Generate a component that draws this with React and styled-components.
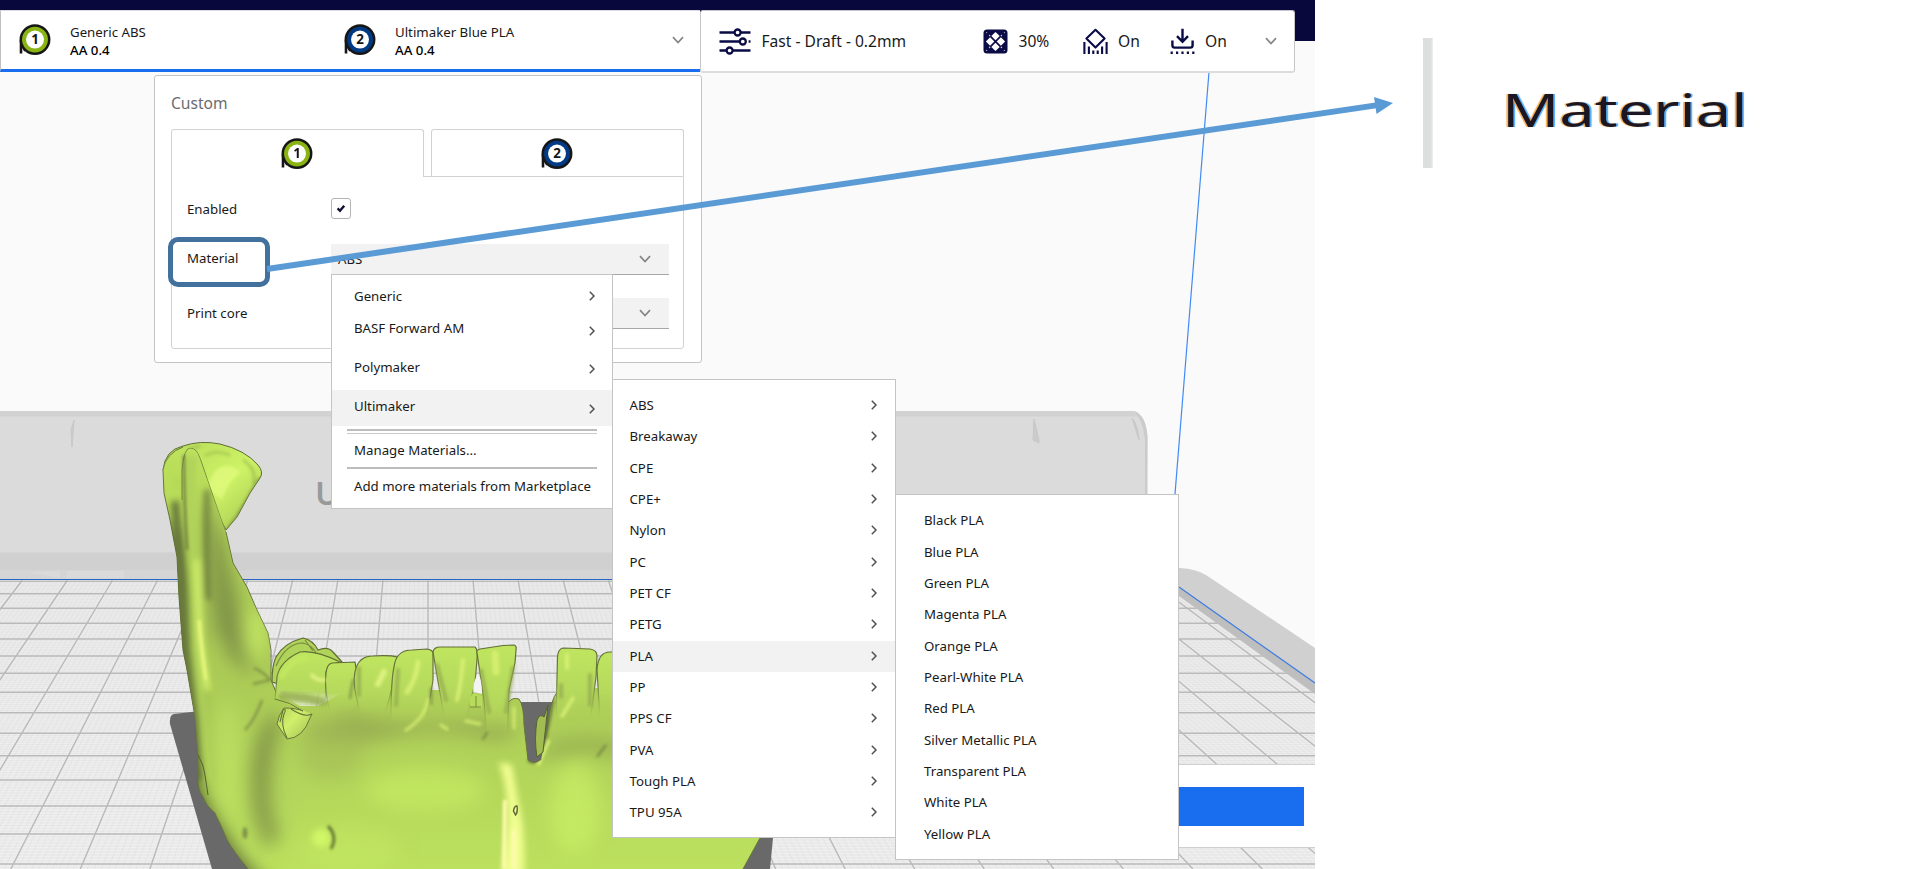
import React from "react";
import styled, { createGlobalStyle } from "styled-components";

const GlobalStyle = createGlobalStyle`
  *, *::before, *::after { box-sizing: border-box; }
  body { margin: 0; background: #fff; overflow: hidden; }
`;

const Page = styled.main`
  position: relative;
  display: flex;
  width: 1920px;
  height: 869px;
  overflow: hidden;
  background: #fff;
  color: #191919;
  font: 13.25px/20px "Noto Sans", sans-serif;
  white-space: nowrap;
`;

const Workspace = styled.section`
  position: relative;
  flex: 0 0 1315px;
  height: 869px;
  overflow: hidden;
  background: linear-gradient(#08083c 0 41px, #fafafa 41px);
`;

const SceneSvg = styled.svg`
  position: absolute;
  inset: 0;
`;

/* ---------- header ---------- */

const Header = styled.header`
  position: relative;
  display: flex;
  padding-top: 10px;
`;

const ExtruderBar = styled.div`
  display: flex;
  align-items: center;
  width: 700px;
  height: 62px;
  padding: 0 16px 0 18px;
  background: #fff;
  border-left: 1px solid #c0c0c4;
  border-top: 1px solid #dcdce0;
  border-bottom: 3px solid #196ef0;
`;

const ExtruderInfo = styled.div`
  display: flex;
  align-items: center;
  width: ${(p) => p.$width}px;
  gap: 19px;
`;

const ExtruderText = styled.div`
  display: flex;
  flex-direction: column;
  padding-top: 1px;
  line-height: 18px;
`;

const CoreName = styled.span`
  color: #000;
  font-weight: 500;
`;

const SettingsBar = styled.div`
  display: flex;
  align-items: center;
  width: 595px;
  height: 63px;
  padding: 0 17px 0 18px;
  background: #fff;
  border: 1px solid #c6c6ca;
  border-bottom: 2px solid #dcdcdc;
  border-radius: 3px;
  font-size: 15.6px;
`;

const Setting = styled.div`
  display: flex;
  align-items: center;
  width: ${(p) => p.$width}px;
  gap: ${(p) => p.$gap}px;
`;

const Push = styled.div`
  margin-left: auto;
  display: flex;
`;

/* ---------- configuration panel ---------- */

const Panel = styled.section`
  position: relative;
  width: 548px;
  height: 288px;
  margin: 2px 0 0 154px;
  padding: 17px 17px 0 16px;
  background: #fff;
  border: 1px solid #c4c4c4;
  border-radius: 3px;
`;

const PanelTitle = styled.h1`
  margin: 0 0 16px;
  color: #6c6c6c;
  font-size: 15.6px;
  line-height: 20px;
  font-weight: 400;
`;

const Tabs = styled.div`
  display: flex;
  gap: 7px;
  height: 47px;
`;

const Tab = styled.div`
  position: relative;
  z-index: ${(p) => (p.$active ? 1 : 0)};
  flex: 1;
  display: flex;
  justify-content: center;
  padding: 8px 1px 0 0;
  margin-bottom: ${(p) => (p.$active ? -1 : 0)}px;
  background: #fff;
  border: 1px solid #d2d2d2;
  border-bottom: 0;
  border-radius: 3px 3px 0 0;
`;

const TabBody = styled.div`
  height: 173px;
  padding: 22px 14px 0 15px;
  border: 1px solid #d2d2d2;
  border-radius: 0 0 3px 3px;
`;

const Field = styled.div`
  display: flex;
  align-items: flex-start;
  height: ${(p) => p.$height}px;
`;

const FieldLabel = styled.label`
  width: 144px;
  padding-top: ${(p) => p.$top}px;
`;

const Checkbox = styled.div`
  display: flex;
  align-items: center;
  justify-content: center;
  width: 20px;
  height: 21px;
  margin-top: -1px;
  background: #fff;
  border: 1px solid #b4b4b4;
  border-radius: 3px;
`;

const Select = styled.div`
  display: flex;
  align-items: center;
  justify-content: space-between;
  width: 338px;
  height: 31px;
  padding: 0 18px 0 7px;
  background: #f2f2f2;
  border-bottom: 1px solid #a8a8a8;
`;

/* ---------- menus ---------- */

const Menu = styled.nav`
  position: absolute;
  left: ${(p) => p.$x}px;
  top: ${(p) => p.$y}px;
  width: ${(p) => p.$width}px;
  height: ${(p) => p.$height}px;
  padding-top: ${(p) => p.$pad}px;
  background: #fff;
  border: 1px solid #c4c4c4;
`;

const MenuItem = styled.div`
  display: flex;
  align-items: center;
  justify-content: space-between;
  height: ${(p) => p.$height}px;
  padding: 0 ${(p) => p.$right || 17}px ${(p) => p.$lift || 1.4}px ${(p) => p.$left}px;
  background: ${(p) => (p.$active ? "#f2f2f2" : "transparent")};
`;

const ArrowSlot = styled.span`
  display: flex;
  padding-top: ${(p) => p.$drop || 0}px;
`;

const Divider = styled.hr`
  height: ${(p) => (p.$double ? 5 : 2)}px;
  margin: ${(p) => (p.$double ? 3 : 0)}px 15px 0;
  border: 0;
  border-top: 2px solid #bdbdbd;
  border-bottom: ${(p) => (p.$double ? 1 : 0)}px solid #cacaca;
`;

/* ---------- action panel ---------- */

const ActionPanel = styled.div`
  position: absolute;
  right: 0;
  top: 764px;
  width: 300px;
  height: 84px;
  padding: 22px 11px;
  background: #fff;
  border: 1px solid #cfcfcf;
  border-width: 1px 0;
`;

const ActionButton = styled.div`
  height: 39px;
  background: #196ef0;
`;

/* ---------- annotation ---------- */

const Callout = styled.aside`
  display: flex;
  align-items: center;
  gap: 69px;
  height: 130px;
  margin: 38px 0 0 108px;
`;

const CalloutBar = styled.span`
  width: 10px;
  height: 130px;
  background: linear-gradient(90deg, #dcdfde 0 80%, #f1f2f2);
`;

const CalloutText = styled.span`
  width: 241px;
  font-size: 46px;
  line-height: 60px;
  transform: translateY(6px) scaleX(1.375);
  transform-origin: left center;
  text-shadow: -1.3px 0 0.6px rgba(245, 150, 30, 0.75), 1.3px 0 0.6px rgba(30, 150, 255, 0.75);
  color: #1c1622;
`;

const HighlightBox = styled.div`
  position: absolute;
  left: 168px;
  top: 237px;
  width: 102px;
  height: 50px;
  border: 5px solid #41719c;
  border-radius: 10px;
`;

/* ---------- icons ---------- */

const Spool = ({ n, color }) => (
  <svg width="32" height="32" viewBox="0 0 32 32">
    <path d="M2 16V29.5" stroke="#161616" strokeWidth="2.6" fill="none" />
    <path d="M2 19L6 27" stroke="#161616" strokeWidth="2" fill="none" />
    <circle cx="16" cy="15.6" r="14.2" fill={color} stroke="#161616" strokeWidth="2.5" />
    <circle cx="16" cy="15.6" r="9" fill="#fff" />
    <text x="16" y="20.4" textAnchor="middle" fontSize="13.4" fontWeight="700" fontFamily="Noto Sans, sans-serif" fill="#161616">{n}</text>
  </svg>
);

const ChevronDown = () => (
  <svg width="12" height="8" viewBox="0 0 12 8" fill="none" stroke="#858585" strokeWidth="1.7">
    <path d="M1 1.2L6 6.6L11 1.2" />
  </svg>
);

const ChevronRight = () => (
  <svg width="6" height="10" viewBox="0 0 6 10" fill="none" stroke="#505050" strokeWidth="1.5">
    <path d="M0.8 0.8L5 5L0.8 9.2" />
  </svg>
);

const SlidersIcon = () => (
  <svg width="32" height="27" viewBox="0 0 32 27" fill="none" stroke="#0b0b45" strokeWidth="2.3">
    <path d="M0.5 4.5H15.5M22 4.5H31.5M0.5 13.5H20M29.6 13.5H31.5M0.5 22.5H7M14 22.5H31.5" />
    <circle cx="18.6" cy="4.5" r="3" />
    <circle cx="23.8" cy="13.5" r="3" />
    <circle cx="10.6" cy="22.5" r="3" />
  </svg>
);

const InfillIcon = () => (
  <svg width="25" height="25" viewBox="0 0 25 25">
    <rect x="0.5" y="0.5" width="24" height="24" rx="3.5" fill="#0b0b45" />
    <g fill="#fff">
      {[[12.5, 7.1], [7.1, 12.5], [17.9, 12.5], [12.5, 17.9]].map(([x, y]) => (
        <path key={`${x}-${y}`} d={`M${x} ${y - 4.2}l4.2 4.2l-4.2 4.2l-4.2 -4.2z`} />
      ))}
      {[[6.6, 6.6], [18.4, 6.6], [6.6, 18.4], [18.4, 18.4]].map(([x, y]) => (
        <circle key={`${x}-${y}`} cx={x} cy={y} r="0.8" opacity="0.75" />
      ))}
      {[[3.6, 3.6], [21.4, 3.6], [3.6, 21.4], [21.4, 21.4]].map(([x, y]) => (
        <circle key={`${x}-${y}`} cx={x} cy={y} r="0.7" opacity="0.6" />
      ))}
    </g>
  </svg>
);

const SupportIcon = () => (
  <svg width="25" height="27" viewBox="0 0 25 27" fill="none" stroke="#0b0b45" strokeWidth="2.1">
    <path d="M12.5 1.8L21.6 10.6L12.5 19.6L3.4 10.6Z" strokeLinejoin="round" />
    <path d="M1.4 14V26M23.6 14V26M5.9 18.5V26M19.1 18.5V26M10.3 22.5V26M14.7 22.5V26" />
  </svg>
);

const AdhesionIcon = () => (
  <svg width="25" height="27" viewBox="0 0 25 27" fill="none" stroke="#0b0b45" strokeWidth="2.4">
    <path d="M12.5 0.8V13M7 8.2L12.5 13.8L18 8.2" />
    <path d="M2.4 12.5V17.2Q2.4 19.6 4.8 19.6H20.2Q22.6 19.6 22.6 17.2V12.5" />
    <path d="M0.6 24.8H24.4" strokeDasharray="2.2 3.2" />
  </svg>
);

const CheckIcon = () => (
  <svg width="10" height="9" viewBox="0 0 10 9" fill="none" stroke="#101030" strokeWidth="2.4">
    <path d="M1.6 4.4L4 6.8L8.2 1.8" />
  </svg>
);

/* ---------- 3D scene ---------- */

const VANISH_X = 428;
const VANISH_Y = 48;
const FLOOR_TOP = 580.5;
const CELL = 45.1;
const ROWS = [580, 593.7, 608.3, 623.3, 639, 656, 673.3, 692.3, 712.7, 733.3, 755.7, 780, 806, 834, 864, 896];
const atBottom = (x) => VANISH_X + ((x - VANISH_X) * (869 - VANISH_Y)) / (FLOOR_TOP - VANISH_Y);

const Floor = () => {
  const major = [];
  const minor = [];
  for (let i = -10; i <= 21; i += 1) {
    const x = VANISH_X + i * CELL;
    major.push(`M${x} ${FLOOR_TOP}L${atBottom(x)} 869`);
    for (let k = 1; k < 10; k += 1) {
      const m = x + (k * CELL) / 10;
      minor.push(`M${m} ${FLOOR_TOP}L${atBottom(m)} 869`);
    }
  }
  ROWS.slice(1).forEach((y, i) => {
    major.push(`M0 ${y}H1315`);
    const step = (y - ROWS[i]) / 10;
    for (let k = 1; k < 10; k += 1) minor.push(`M0 ${ROWS[i] + k * step}H1315`);
  });
  return (
    <g clipPath="url(#floorClip)">
      <rect x="0" y="580" width="1315" height="289" fill="#efefef" />
      <path d={minor.join("")} stroke="#d8d8d8" strokeWidth="0.5" opacity="0.7" fill="none" />
      <path d={major.join("")} stroke="#b9b9b9" strokeWidth="1.4" fill="none" />
    </g>
  );
};

const JAW_BODY =
  "M270 640L271 680L278 694L300 706L318 706L340 694L392 690L440 690L473 693L482 692L508 702Q512 697 519 699Q524 706 524 725L528 760Q534 765 541 760L548 725Q550 700 558 691L597 688H765V810L760 838L743 869H248Q234 852 227 840Q221 825 215 813Q206 806 203 797Q197 788 198 780L198 753L195 717L187 670L183 650L179 597L177 557L170 520L164 493L163 470Q166 453 183 447L195 448Q201 455 208 480L226 532L233 563L247 587L257 610L268 633Z";

const JAW_OUTLINE =
  "M248 869Q234 852 227 840Q221 825 215 813Q206 806 203 797Q197 788 198 780L198 753L195 717L187 670L183 650L179 597L177 557L170 520L164 493L163 470Q166 453 183 447M226 532L233 563L247 587L257 610L268 633L271 650L271 680L276 692M509 702Q512 697 519 699Q524 706 524 725L528 760Q534 765 541 760L548 725Q550 700 558 691M765 810L760 838L743 869";

const CONDYLE =
  "M163 470Q165 450 183 446Q200 440 220 444Q245 450 258 465Q264 472 260 478L250 493L237 517L226 530L200 480Z";

const TEETH = [
  "M275 700L277 677Q280 661 300 652Q315 650 340 662Q328 664 326 672L326 707L313 714",
  "M330 712Q324 690 326 673Q327 664 332 663L355 662L358 680L358 705Q350 714 340 713",
  "M360 712Q352 685 355 672Q358 656 373 656Q390 655 397 657L392 687Q389 703 383 716",
  "M391 722Q391 680 394 667Q396 650 412 650L427 649Q434 650 433 655L433 680Q430 700 425 724",
  "M445 720L440 693L433 652Q434 647 440 647L475 647Q478 649 477 660L475 683L466 720",
  "M487 738L484 700L477 653Q476 650 480 649L503 645.5L514 645Q517 646 516 650L515 663L509 690L507 738",
  "M556 720L557.5 657Q558 649 563 648L590 649Q597 650 597 656L596 677L590 722",
  "M600 720L597 670Q598 652 610 652H640V720",
];

const Jaw = () => (
  <g>
    <path d={CONDYLE} fill="url(#condyle)" stroke="#5f6d35" strokeWidth="1" />
    <g filter="url(#soft3)" opacity="0.7" clipPath="url(#condyleClip)" fill="none">
      <path d="M208 488Q213 466 226 466Q236 466 240 473Q230 478 222 500Z" fill="#e4fb80" />
      <path d="M205 456Q215 449 230 455" stroke="#a3c353" strokeWidth="3" />
      <path d="M243 460Q258 470 253 484" stroke="#9fbe50" strokeWidth="3" />
      <path d="M260 478L237 517L226 532" stroke="#7d9440" strokeWidth="4" />
      <path d="M165 465Q180 450 200 446" stroke="#9ebc50" strokeWidth="3" />
    </g>

    <path d="M272 682Q272 665 276 657Q284 643 303 638Q313 640 318 650Q328 646 333 652L342 662L300 690Z" fill="#b0d359" stroke="#5f6d35" strokeWidth="1.2" />
    <path d="M276 666Q286 643 303 643Q312 645 316 653M305 640L313 651" stroke="#788b40" strokeWidth="1.2" fill="none" />

    <path d={JAW_BODY} fill="url(#bone)" />
    <path d={JAW_OUTLINE} fill="none" stroke="#66753a" strokeWidth="1" />

    <g clipPath="url(#jawClip)">
      <g filter="url(#soft10)">
        <path d="M150 520L181 530L188 600L196 700L202 790L252 880H190L150 620Z" fill="#5a6932" opacity="0.95" />
        <path d="M206 490Q207 570 214 625L232 660L254 675Q238 600 224 540Z" fill="#7d9146" opacity="0.95" />
        <path d="M272 712Q250 740 250 775Q248 820 268 850L280 835Q262 790 283 722Z" fill="#788a44" opacity="0.75" />
        <path d="M200 805Q230 845 262 880L310 900H190Z" fill="#606e38" opacity="0.95" />
        <path d="M300 730Q340 750 390 738T500 742L520 730L500 718Q400 728 350 712Z" fill="#8da04e" opacity="0.65" />
        <path d="M545 742Q590 730 630 742V760Q580 748 545 762Z" fill="#8fa64f" opacity="0.65" />
        <ellipse cx="330" cy="750" rx="34" ry="30" fill="#9fb856" opacity="0.5" />
        <ellipse cx="228" cy="760" rx="12" ry="60" fill="#bfe262" opacity="0.7" />
        <ellipse cx="255" cy="635" rx="9" ry="26" fill="#cbef66" opacity="0.9" />
        <ellipse cx="425" cy="790" rx="60" ry="22" fill="#cff766" opacity="0.45" />
        <ellipse cx="575" cy="808" rx="26" ry="45" fill="#d0f867" opacity="0.5" />
        <ellipse cx="290" cy="775" rx="12" ry="45" fill="#b2d45c" opacity="0.5" />
        <ellipse cx="350" cy="850" rx="50" ry="25" fill="#c4ea62" opacity="0.5" />
      </g>
      <g filter="url(#soft5)" fill="none">
        <path d="M192 455Q187 500 194 560L196 640Q201 730 212 780" stroke="#b0d25a" strokeWidth="11" />
        <path d="M174 480Q177 540 184 590L187 650L195 720L199 780" stroke="#65743a" strokeWidth="8" />
        <path d="M207 490Q206 550 208 600" stroke="#66763a" strokeWidth="5" />
        <path d="M197 560L201 640L208 690" stroke="#d9f670" strokeWidth="5" />
        <path d="M170 460Q172 480 176 500" stroke="#b8dd58" strokeWidth="9" />
        <path d="M499 762Q510 795 507 830L502 875H524Q526 830 518 800L512 765Z" fill="#f0fd90" />
        <ellipse cx="321" cy="838" rx="9" ry="9" fill="#d0f768" />
      </g>
      <g filter="url(#soft3)" fill="none">
        <path d="M184 455Q184 500 187 550" stroke="#6f803e" strokeWidth="2.5" />
        <path d="M199 620Q202 655 206 680" stroke="#eaf97f" strokeWidth="3" />
        <path d="M505 800L504 869M514 830V869" stroke="#fffcae" strokeWidth="4" />
        <path d="M254 668Q264 672 271 681M253 684L270 680M262 700Q255 720 245 730" stroke="#7c8f45" strokeWidth="2.2" />
        <path d="M328 826Q338 836 331 849" stroke="#59672f" strokeWidth="2.6" />
        <ellipse cx="245" cy="833" rx="2.5" ry="6" fill="#7e9147" />
        <path d="M528 760Q538 768 544 745L553 700" stroke="#66753a" strokeWidth="3" />
        <path d="M597 757Q602 750 606 745" stroke="#6c7c3c" strokeWidth="2" />
        <path d="M538 765L549 740" stroke="#e0f97a" strokeWidth="3" />
      </g>
      <path d="M182 500L182 470Q184 448 190 448Q197 448 200 458L226 532" stroke="#5a6932" strokeWidth="0.9" fill="none" opacity="0.75" />
      <path d="M198 755Q204 765 205 775L208 795" stroke="#55622e" strokeWidth="1" fill="none" />
    </g>

    {TEETH.map((d) => (
      <path key={d} d={d} fill="url(#tooth)" stroke="url(#toothEdge)" strokeWidth="1.2" />
    ))}

    <g filter="url(#soft3)" fill="none" strokeLinecap="round" opacity="0.7">
      <path d="M398 670L396 705M437 665L446 700M481 670L489 712M513 668L506 712M590 675V705M561 685V697M359 668V695" stroke="#8fa64d" strokeWidth="4" />
      <path d="M283 696L305 698L322 702" stroke="#91a84e" strokeWidth="8" />
      <path d="M282 676Q290 660 306 658" stroke="#c5ea61" strokeWidth="6" />
      <path d="M418 662Q416 680 407 692" stroke="#e2f67c" strokeWidth="5" />
      <path d="M463 660Q461 685 457 700" stroke="#e2f67c" strokeWidth="4" />
      <path d="M495 654L496 672" stroke="#ddf474" strokeWidth="7" />
      <path d="M378 684L384 672" stroke="#ebf98c" strokeWidth="6" />
      <path d="M312 675Q317 681 324 680" stroke="#eefa90" strokeWidth="4" />
      <path d="M567 655V668M573 698L562 716" stroke="#e0f67a" strokeWidth="4" />
      <path d="M428 700Q425 718 406 730M441 725L447 729M466 721L480 724M514 708V728" stroke="#dcf374" strokeWidth="3.5" />
      <path d="M353 680L350 698M431 688V704M487 733L483 739" stroke="#65753a" strokeWidth="2.2" />
    </g>

    <path d="M275 699Q290 702 303 711Q296 708 284 708Q278 716 277 724L287 739Q303 738 310 718L312 714" fill="url(#socket)" stroke="#66753a" strokeWidth="1" />
    <path d="M280 722L283 710Q287 708 284 714Q280 724 287 738M291 709Q305 718 312 714" stroke="#65743a" strokeWidth="1.1" fill="none" />
    <path d="M478 673Q472 685 473.5 692L482 694Q482 680 478 673Z" fill="#f4f4f4" />
    <path d="M470 707Q469 695 474 693L482 696V708Z" fill="#b7dc5c" />
    <path d="M476 696V707M470 707H481" stroke="#78893f" strokeWidth="1" />
    <path d="M537 757Q534 740 537 720Q540 713 544 717L548 705L543 752Z" fill="#a1bc52" stroke="#55632f" strokeWidth="1" />
    <path d="M513.5 811Q514 806 517 806Q518 812 515.5 815Z" fill="#eef59a" stroke="#5f6d35" strokeWidth="1.5" />
  </g>
);

const Scene = () => (
  <SceneSvg width="1315" height="869" viewBox="0 0 1315 869">
    <defs>
      <clipPath id="floorClip"><path d="M0 580H1163L1179 592L1315 692V869H0Z" /></clipPath>
      <clipPath id="jawClip"><path d={JAW_BODY} /></clipPath>
      <clipPath id="condyleClip"><path d={CONDYLE} /></clipPath>
      <linearGradient id="bone" gradientUnits="userSpaceOnUse" x1="0" y1="440" x2="0" y2="869">
        <stop offset="0" stopColor="#bfe45e" />
        <stop offset="0.45" stopColor="#a9c856" />
        <stop offset="0.7" stopColor="#b0d159" />
        <stop offset="1" stopColor="#bce15e" />
      </linearGradient>
      <linearGradient id="condyle" x1="0" y1="0" x2="1" y2="1">
        <stop offset="0" stopColor="#b5da58" />
        <stop offset="0.55" stopColor="#cdf366" />
        <stop offset="1" stopColor="#a3c150" />
      </linearGradient>
      <linearGradient id="socket" x1="0" y1="0" x2="1" y2="1">
        <stop offset="0" stopColor="#a8c653" />
        <stop offset="0.5" stopColor="#d0ef6c" />
        <stop offset="1" stopColor="#a3bf52" />
      </linearGradient>
      <linearGradient id="tooth" x1="0" y1="0" x2="0" y2="1">
        <stop offset="0" stopColor="#bfe560" />
        <stop offset="0.6" stopColor="#b5d95c" />
        <stop offset="1" stopColor="#b0d059" stopOpacity="0" />
      </linearGradient>
      <linearGradient id="toothEdge" x1="0" y1="0" x2="0" y2="1">
        <stop offset="0" stopColor="#5f6d35" />
        <stop offset="0.5" stopColor="#6d7d3c" />
        <stop offset="0.95" stopColor="#8fa64f" stopOpacity="0" />
      </linearGradient>
      <filter id="soft10" x="-30%" y="-30%" width="160%" height="160%"><feGaussianBlur stdDeviation="9" /></filter>
      <filter id="soft5" x="-30%" y="-30%" width="160%" height="160%"><feGaussianBlur stdDeviation="3.4" /></filter>
      <filter id="soft3" x="-30%" y="-30%" width="160%" height="160%"><feGaussianBlur stdDeviation="1.6" /></filter>
    </defs>

    {/* back wall of the printer */}
    <path d="M0 411H1134Q1146 415 1147.5 437L1146 580H0Z" fill="#dbdbdb" />
    <path d="M0 411H1134L1140 416.5H0Z" fill="#d2d2d2" />
    <path d="M1134 411Q1146 415 1147.5 437V500H1145V440Q1143 420 1134 411Z" fill="#cbcbcb" />
    <path d="M0 552.5H1179V580H0Z" fill="#d0d0d0" />
    <path d="M0 570H1179V580H0Z" fill="#d5d5d5" />
    <path d="M74 420L72 447L71 430ZM1034 419L1039 440V443L1033 440ZM1132 418Q1138 425 1139 440Z" fill="#cbcbcb" stroke="#c8c8c8" />
    <path d="M26 572L60 578V571ZM67 571H124V578H67Z" fill="#dadada" />
    <text x="315" y="505" fontFamily="Noto Sans, sans-serif" fontSize="33" fontWeight="600" fill="#999">U</text>
    <Floor />
    <path d="M0 581.2H1170" stroke="#a9a9a9" strokeWidth="1" />
    <path d="M0 579.5H1170" stroke="#2767c4" strokeWidth="1" />

    {/* right rim of the build plate */}
    <path d="M1150 568H1180Q1196 569 1206 575L1315 648V693L1179 593L1150 575Z" fill="#d0d0d0" />
    <path d="M1179 587L1315 683V694L1179 596Z" fill="#bebebe" />
    <path d="M1179 587L1315 683" stroke="#3d7de0" strokeWidth="1.2" />
    <path d="M1209 72L1175 494" stroke="#3f8af5" strokeWidth="1.2" />

    {/* shadow and model */}
    <path d="M170 724Q169 715 174 714L200 711L505 702H773V838L770 869H212Z" fill="#696969" />
    <Jaw />
  </SceneSvg>
);

/* ---------- data ---------- */

const BRANDS = [
  { name: "Generic", height: 33, drop: 0 },
  { name: "BASF Forward AM", height: 32, drop: 5 },
  { name: "Polymaker", height: 45, drop: 4 },
];
const TYPES = ["ABS", "Breakaway", "CPE", "CPE+", "Nylon", "PC", "PET CF", "PETG", "PLA", "PP", "PPS CF", "PVA", "Tough PLA", "TPU 95A"];
const COLORS = ["Black PLA", "Blue PLA", "Green PLA", "Magenta PLA", "Orange PLA", "Pearl-White PLA", "Red PLA", "Silver Metallic PLA", "Transparent PLA", "White PLA", "Yellow PLA"];

export default function App() {
  return (
    <Page>
      <GlobalStyle />
      <Workspace>
        <Scene />
        <Header>
          <ExtruderBar>
            <ExtruderInfo $width={325}>
              <Spool n="1" color="#8ab414" />
              <ExtruderText>
                <span>Generic ABS</span>
                <CoreName>AA 0.4</CoreName>
              </ExtruderText>
            </ExtruderInfo>
            <ExtruderInfo $width={260}>
              <Spool n="2" color="#003a84" />
              <ExtruderText>
                <span>Ultimaker Blue PLA</span>
                <CoreName>AA 0.4</CoreName>
              </ExtruderText>
            </ExtruderInfo>
            <Push><ChevronDown /></Push>
          </ExtruderBar>
          <SettingsBar>
            <Setting $width={264} $gap={10.5}><SlidersIcon />Fast - Draft - 0.2mm</Setting>
            <Setting $width={100} $gap={10.5}><InfillIcon />30%</Setting>
            <Setting $width={87} $gap={10}><SupportIcon />On</Setting>
            <Setting $width={60} $gap={10}><AdhesionIcon />On</Setting>
            <Push><ChevronDown /></Push>
          </SettingsBar>
        </Header>

        <Panel>
          <PanelTitle>Custom</PanelTitle>
          <Tabs>
            <Tab $active><Spool n="1" color="#8ab414" /></Tab>
            <Tab><Spool n="2" color="#003a84" /></Tab>
          </Tabs>
          <TabBody>
            <Field $height={45}>
              <FieldLabel $top={0}>Enabled</FieldLabel>
              <Checkbox><CheckIcon /></Checkbox>
            </Field>
            <Field $height={54}>
              <FieldLabel $top={4}>Material</FieldLabel>
              <Select>ABS<ChevronDown /></Select>
            </Field>
            <Field $height={31}>
              <FieldLabel $top={5}>Print core</FieldLabel>
              <Select><span />
                <ChevronDown />
              </Select>
            </Field>
          </TabBody>
        </Panel>

        <ActionPanel><ActionButton /></ActionPanel>

        <Menu $x={331} $y={274} $width={282} $height={235} $pad={5}>
          {BRANDS.map((b) => (
            <MenuItem key={b.name} $height={b.height} $left={22}>
              {b.name}
              <ArrowSlot $drop={b.drop}><ChevronRight /></ArrowSlot>
            </MenuItem>
          ))}
          <MenuItem $height={36} $left={22} $lift={4.5} $active>
            Ultimaker
            <ArrowSlot $drop={6}><ChevronRight /></ArrowSlot>
          </MenuItem>
          <Divider $double />
          <MenuItem $height={33} $left={22}>Manage Materials...</MenuItem>
          <Divider />
          <MenuItem $height={35} $left={22}>Add more materials from Marketplace</MenuItem>
        </Menu>

        <Menu $x={612} $y={379} $width={284} $height={459} $pad={10}>
          {TYPES.map((t) => (
            <MenuItem key={t} $height={31.33} $left={16.5} $right={18} $active={t === "PLA"}>
              {t}
              <ChevronRight />
            </MenuItem>
          ))}
        </Menu>

        <Menu $x={895} $y={494} $width={284} $height={366} $pad={10.5}>
          {COLORS.map((c) => (
            <MenuItem key={c} $height={31.33} $left={28}>{c}</MenuItem>
          ))}
        </Menu>
      </Workspace>

      <Callout>
        <CalloutBar />
        <CalloutText>Material</CalloutText>
      </Callout>

      <HighlightBox />
      <SceneSvg width="1920" height="869" viewBox="0 0 1920 869">
        <path d="M267 269L1376 105.4" stroke="#5b9bd5" strokeWidth="6" />
        <path d="M1393 103L1374 97L1376.5 114Z" fill="#5b9bd5" />
      </SceneSvg>
    </Page>
  );
}
